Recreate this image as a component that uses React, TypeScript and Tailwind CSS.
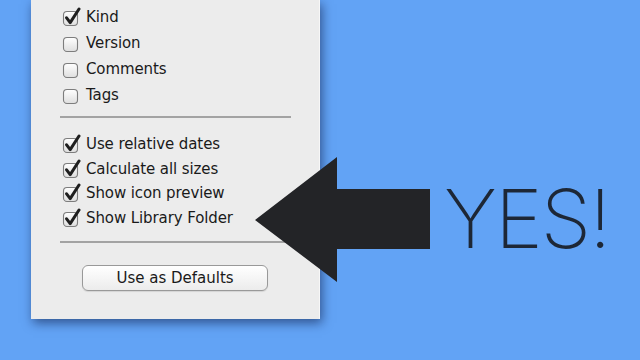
import React from 'react';

const sysFont = { fontFamily: '"DejaVu Sans", "Liberation Sans", sans-serif' };

function CheckBox({ checked }: { checked: boolean }) {
  return (
    <svg width="20" height="20" viewBox="0 0 20 20" className="flex-shrink-0">
      <defs>
        <linearGradient id="cbg" x1="0" y1="0" x2="0" y2="1">
          <stop offset="0" stopColor="#ffffff" />
          <stop offset="1" stopColor="#dedede" />
        </linearGradient>
      </defs>
      <rect x="1.5" y="4.5" width="14" height="14" rx="3.5" fill="url(#cbg)" stroke="#7d7d7d" strokeWidth="1.1" />
      {checked && (
        <path
          d="M4.6 10.8 L8.2 15.6 L17 2"
          fill="none"
          stroke="#1f1f1f"
          strokeWidth="3"
          strokeLinecap="round"
          strokeLinejoin="round"
        />
      )}
    </svg>
  );
}

function Row({ label, checked, h }: { label: string; checked: boolean; h: string }) {
  return (
    <div className={`flex items-center gap-[4px] ${h}`}>
      <CheckBox checked={checked} />
      <span className="text-[15px] text-[#1a1a1a] tracking-[-0.1px]" style={sysFont}>
        {label}
      </span>
    </div>
  );
}

export default function App() {
  const columns = [
    { label: 'Kind', checked: true },
    { label: 'Version', checked: false },
    { label: 'Comments', checked: false },
    { label: 'Tags', checked: false },
  ];
  const options = [
    'Use relative dates',
    'Calculate all sizes',
    'Show icon preview',
    'Show Library Folder',
  ];

  return (
    <div className="relative w-[640px] h-[360px] overflow-hidden bg-[#62a3f5]">
      {/* Finder view options panel */}
      <div className="ml-[31px] w-[289px] h-[319px] bg-[#ececec] border-r border-[#f7f7f7] shadow-[2px_4px_10px_rgba(10,20,60,0.55)] flex flex-col">
        <div className="pl-[31px] pt-[4px] flex flex-col">
          {columns.map((c) => (
            <Row key={c.label} label={c.label} checked={c.checked} h="h-[26px]" />
          ))}
        </div>
        <div className="ml-[29px] mr-[28px] mt-[8px] h-[2px] bg-[#a3a3a3]" />
        <div className="pl-[31px] pt-[14px] flex flex-col">
          {options.map((o) => (
            <Row key={o} label={o} checked={true} h="h-[24.6px]" />
          ))}
        </div>
        <div className="ml-[29px] mr-[28px] mt-[11px] h-[2px] bg-[#a3a3a3]" />
        <div className="flex justify-center mt-[22px]">
          <button
            className="w-[186px] h-[26px] rounded-[6px] border border-[#999] bg-gradient-to-b from-white to-[#ececec] text-[15px] text-[#1a1a1a] shadow-[0_1px_1px_rgba(0,0,0,0.1)]"
            style={sysFont}
          >
            Use as Defaults
          </button>
        </div>
      </div>

      {/* Big arrow pointing at the option */}
      <svg
        className="absolute left-[255px] top-[157px]"
        width="176"
        height="126"
        viewBox="0 0 176 126"
      >
        <polygon points="0,63 82,0 82,32 175,32 175,92 82,92 82,125" fill="#232427" />
      </svg>

      <div
        className="absolute left-[444px] top-[179px] text-[81px] leading-none font-extralight text-[#1d2736] tracking-[-2px]"
        style={{ fontFamily: 'Inter, "Liberation Sans", sans-serif' }}
      >
        YES!
      </div>
    </div>
  );
}
